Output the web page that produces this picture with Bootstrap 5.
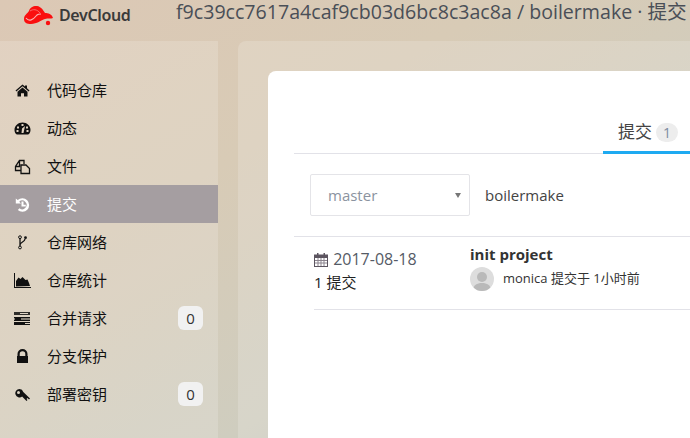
<!DOCTYPE html>
<html lang="en">
<head>
  <meta charset="UTF-8">
  <title>DevCloud</title>
  <link href="https://cdn.jsdelivr.net/npm/bootstrap@5.3.0/dist/css/bootstrap.min.css" rel="stylesheet">
  <style>
    html, body { height: 100%; }
    body {
      width: 690px;
      height: 438px;
      overflow: hidden;
      background: linear-gradient(150deg, #dcc8b5 0%, #d8cbb6 35%, #cfcdbf 68%, #bcbfb9 100%);
      font-family: "Open Sans", "Noto Sans CJK SC", sans-serif;
      color: #000;
    }
    .top-bar { height: 41px; flex: none; }
    .brand-box { width: 176px; padding-left: 23px; padding-top: 4px; }
    .brand-name { font-family: "Noto Sans", sans-serif; font-size: 16px; font-weight: 600; color: #3a3a3a; margin-left: 5px; letter-spacing: -.35px; line-height: 22px; }
    .page-title { font-size: 19.6px; line-height: 24px; color: #4a4f57; white-space: nowrap; }
    .side-menu { width: 218px; flex: none; background: rgba(255,255,255,.17); padding-top: 30px; height: 397px; }
    .menu-row { height: 38px; padding-left: 14px; padding-right: 15px; font-size: 15px; color: #111; }
    .menu-row.active-row { background: #a59ea1; color: #fff; }
    .menu-ico { width: 17px; height: 17px; margin-right: 16px; flex: none; fill: currentColor; }
    .menu-count { width: 25px; height: 24px; background: #f1f1f1; border-radius: 6px; font-size: 15px; color: #333; }
    .main-panel { margin-left: 20px; flex: 1; background: rgba(255,255,255,.17); border-top-left-radius: 8px; padding: 30px 0 0 30px; min-width: 0; }
    .white-panel { background: #fff; border-top-left-radius: 8px; height: 100%; padding-left: 26px; overflow: hidden; }
    .tab-row { height: 83px; border-bottom: 1px solid #e2e2e8; padding-left: 309px; }
    .tab-on { width: 90px; height: 83px; border-bottom: 3px solid #1eaaf1; font-size: 17px; color: #444; padding: 42px 0 0 15px; }
    .tab-count { width: 22px; height: 19px; margin-left: 4px; border-radius: 10px; background: #ededed; color: #7d8ba0; font-size: 14px; }
    .branch-row { height: 83px; border-bottom: 1px solid #e2e2e8; padding-left: 16px; }
    .branch-box { width: 160px; height: 42px; border: 1px solid #e4e4e8; border-radius: 2px; padding: 0 8px 0 17px; color: #8b93a0; font-size: 15px; }
    .branch-caret { width: 0; height: 0; border-left: 3px solid transparent; border-right: 3px solid transparent; border-top: 5px solid #777; }
    .repo-name { margin-left: 15px; font-size: 15px; color: #444; }
    .commit-row { margin-left: 20px; height: 73px; border-bottom: 1px solid #e2e2e8; }
    .commit-date { width: 156px; flex: none; padding-top: 11px; }
    .date-line { font-size: 16px; color: #555b66; line-height: 22px; white-space: nowrap; }
    .count-line { font-size: 15px; color: #222; line-height: 22px; margin-top: 1px; }
    .commit-title { font-size: 15px; font-weight: 700; color: #333; line-height: 18px; padding-top: 8px; }
    .commit-meta { font-size: 13px; color: #333; margin-top: 4px; white-space: nowrap; }
    .avatar-dot { width: 24px; height: 24px; border-radius: 50%; background: #ddd; overflow: hidden; margin-right: 9px; flex: none; }
    .cal-ico { vertical-align: -2px; margin-right: 1px; }
  </style>
</head>
<body>
  <div class="d-flex flex-column h-100">
    <div class="top-bar d-flex align-items-start">
      <div class="brand-box d-flex align-items-center">
        <svg width="31" height="21" viewBox="0 0 31 21"><path fill="#fa0f0f" d="M1 14C1 10 4 9 6 6 7 2 11 .5 14 1c4 .5 6 4 8 7 3 0 7 1 8 5-2 1-5 0-8 1-4 1-8 5-14 5-4 0-7-1-7-5z"/><circle cx="25" cy="18" r="2.200" fill="#fa0f0f"/><path fill="none" stroke="#fbb4b4" stroke-width="1.200" d="M3 13c3 4 7 2 11-3 1-1 3-1 4-1"/><path fill="none" stroke="#f98080" stroke-width=".8" d="M7 6c3-2 7-2 10 2"/></svg>
        <span class="brand-name">DevCloud</span>
      </div>
      <div class="page-title">f9c39cc7617a4caf9cb03d6bc8c3ac8a / boilermake · 提交</div>
    </div>
    <div class="d-flex flex-grow-1">
      <div class="side-menu">
        <div class="menu-row d-flex align-items-center"><svg class="menu-ico" viewBox="0 0 17 17"><path d="M8.500 2.500 1.500 8.500l.8 1 6.200-5.300 6.200 5.300.8-1-2.500-2.200V3.500h-2v1.100zM3.500 9.800V14.500h3.500v-3.300h3v3.300h3.500V9.800L8.500 5.600z"/></svg>代码仓库</div>
        <div class="menu-row d-flex align-items-center"><svg class="menu-ico" viewBox="0 0 17 17"><path fill-rule="evenodd" d="M8.500 2.500C4 2.500.5 5.800.5 9.800c0 1.600.5 3 1.300 4l1 .7h11.400l1-.7c.8-1 1.300-2.400 1.300-4 0-4-3.500-7.300-8-7.300zM7.500 4h2v2h-2zM3 6.500h2v2H3zM12 6.500h2v2h-2zM2.500 10h2v2h-2zM12.500 10h2v2h-2zM7.500 13 8 8.500l3-2.500-1.500 7z"/></svg>动态</div>
        <div class="menu-row d-flex align-items-center"><svg class="menu-ico" viewBox="0 0 17 17"><path fill="none" stroke="currentColor" stroke-width="1.300" d="M7 12.500H1.500V8.500L5.500 2.500H10V6M7 7h5l3.500 3.500V15.500H7zM1.500 8.500H5.500V2.500"/></svg>文件</div>
        <div class="menu-row active-row d-flex align-items-center"><svg class="menu-ico" viewBox="0 0 17 17"><path d="M1.800 2.500v5H7L5.200 5.800A4.300 4.300 0 1 1 5.500 12.200L3.800 14A6.800 6.800 0 1 0 3.700 4z"/><path d="M7.500 5.500h2v3.200h2.300v1.800H7.500z"/></svg>提交</div>
        <div class="menu-row d-flex align-items-center"><svg class="menu-ico" viewBox="0 0 17 17"><path fill="none" stroke="currentColor" stroke-width="1.300" d="M6 4v8M11 5c0 3-5 3-5 6"/><circle cx="6" cy="3.200" r="1.400" fill="none" stroke="currentColor"/><circle cx="11.500" cy="3.700" r="1.400"/><circle cx="6" cy="13.500" r="1.400" fill="none" stroke="currentColor"/></svg>仓库网络</div>
        <div class="menu-row d-flex align-items-center"><svg class="menu-ico" viewBox="0 0 17 17"><path d="M0 1h1v14h16v1H0z"/><path d="M2 14.500V9l2.500-3.500 2 1.500L8.500 5l3 3 2-.5 1.500 3.500 1 3z"/></svg>仓库统计</div>
        <div class="menu-row d-flex align-items-center"><svg class="menu-ico" viewBox="0 0 17 17"><path d="M0 2h16v1H0zM0 3h6v1H0zM14 3h2v1h-2zM0 4h16v1H0z" opacity=".85"/><path d="M0 7h16v4H0z" opacity=".45"/><path d="M1 8h6v2H1zM0 7h16v1H0zM0 10h16v1H0z"/><path d="M0 12h16v1H0zM0 13h11v1H0zM0 14h16v1H0z"/></svg><span class="flex-grow-1">合并请求</span><span class="menu-count d-flex align-items-center justify-content-center">0</span></div>
        <div class="menu-row d-flex align-items-center"><svg class="menu-ico" viewBox="0 0 17 17"><path d="M3.500 8V6a5 5 0 0 1 10 0v2h.5v7H3V8zm2.200 0h5.600V6a2.800 2.800 0 0 0-5.600 0z"/></svg>分支保护</div>
        <div class="menu-row d-flex align-items-center"><svg class="menu-ico" viewBox="0 0 17 17"><path fill-rule="evenodd" d="M5.500 3a4.200 4.200 0 1 0 2.600 7.500L12.500 15l1-1-1-1 1-1 1.500 1.500 1-1L9.300 6A4.200 4.200 0 0 0 5.500 3zM4.500 5a1.500 1.500 0 1 1 0 3 1.500 1.500 0 0 1 0-3z"/></svg><span class="flex-grow-1">部署密钥</span><span class="menu-count d-flex align-items-center justify-content-center">0</span></div>
      </div>
      <div class="main-panel">
        <div class="white-panel">
          <div class="tab-row d-flex">
            <div class="tab-on d-flex align-items-center">提交<span class="tab-count d-flex align-items-center justify-content-center">1</span></div>
          </div>
          <div class="branch-row d-flex align-items-center">
            <div class="branch-box d-flex align-items-center justify-content-between"><span>master</span><span class="branch-caret"></span></div>
            <span class="repo-name">boilermake</span>
          </div>
          <div class="commit-row d-flex">
            <div class="commit-date">
              <div class="date-line"><svg class="cal-ico" width="14" height="15" viewBox="0 0 14 15"><path fill="#5c5560" d="M0 2.500h3V1h1.500v1.500h5V1H11v1.500h3V15H0zm1 3.500v8h12V6z"/><path stroke="#8c858f" fill="none" d="M1 8.500h12M1 11h12M4 6v8M7 6v8M10 6v8"/></svg> 2017-08-18</div>
              <div class="count-line">1 提交</div>
            </div>
            <div>
              <div class="commit-title">init project</div>
              <div class="commit-meta d-flex align-items-center">
                <span class="avatar-dot"><svg width="24" height="24" viewBox="0 0 24 24"><circle cx="12" cy="10" r="5" fill="#b9b9b9"/><path fill="#b9b9b9" d="M3 24c0-6 4-8 9-8s9 2 9 8z"/></svg></span>
                monica 提交于 1小时前
              </div>
            </div>
          </div>
        </div>
      </div>
    </div>
  </div>
  <script src="https://cdn.jsdelivr.net/npm/bootstrap@5.3.0/dist/js/bootstrap.bundle.min.js"></script>
</body>
</html>
